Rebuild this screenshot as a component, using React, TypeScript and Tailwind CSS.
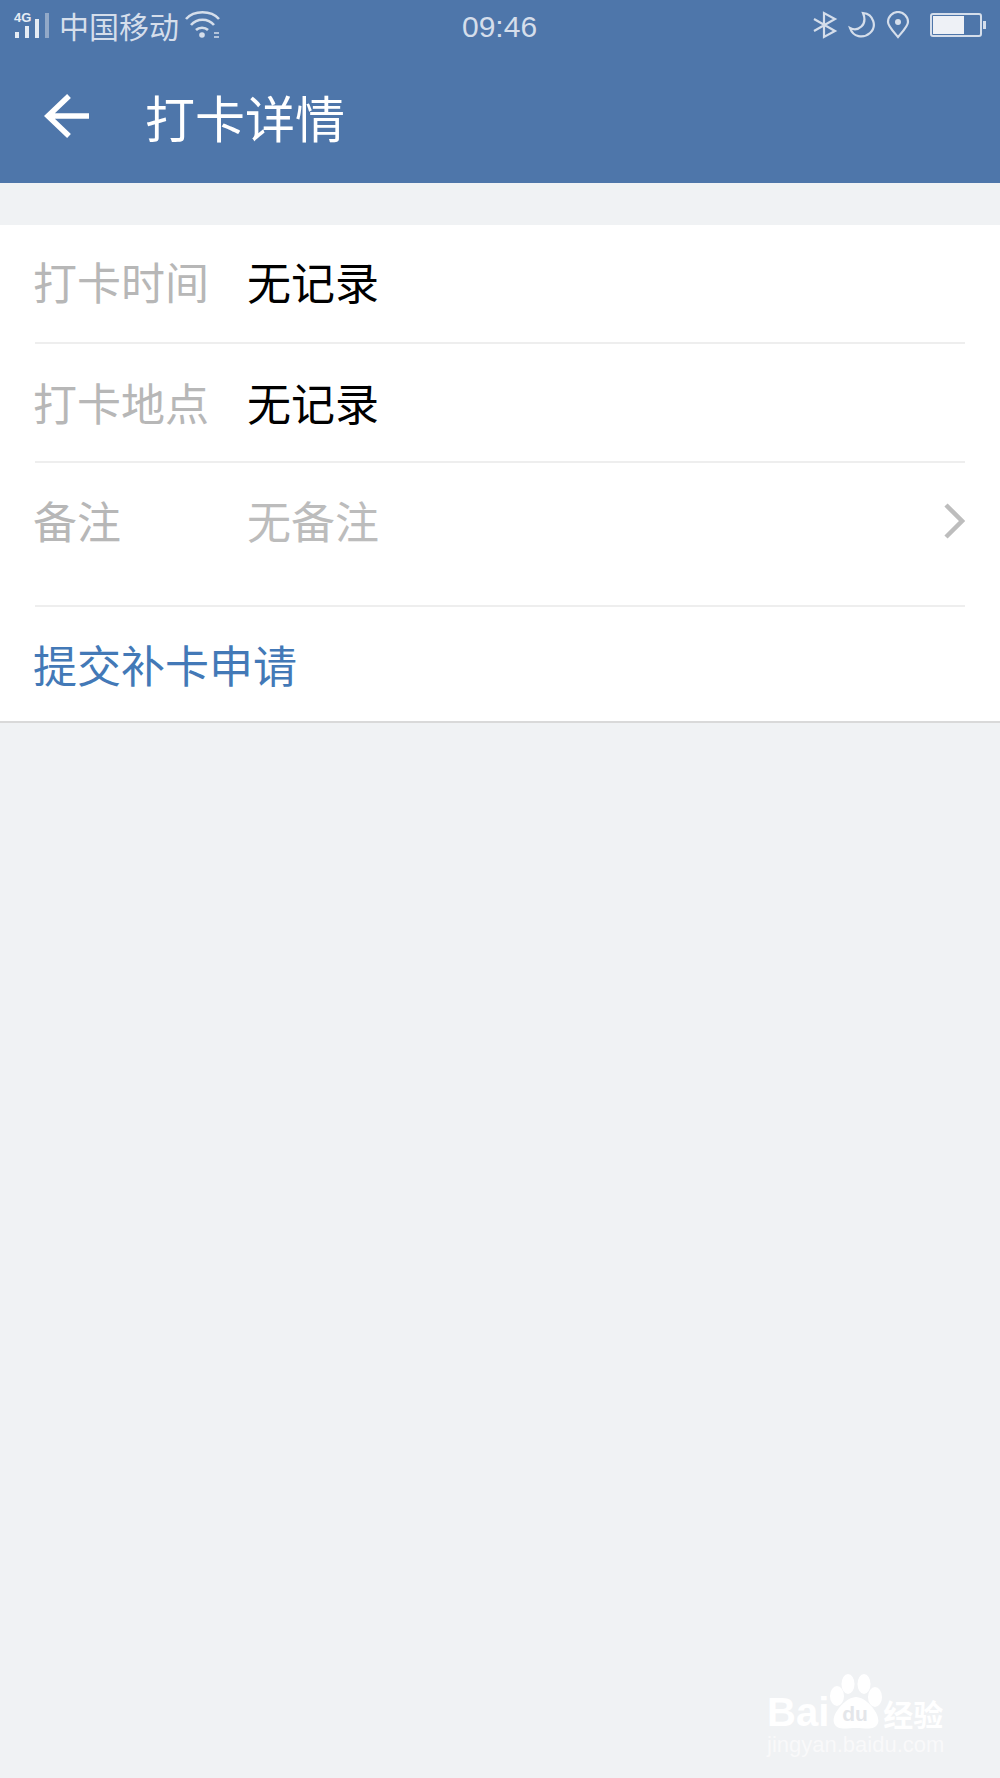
import React from 'react';

const font = { fontFamily: '"Noto Sans CJK SC", "Liberation Sans", sans-serif' };
const latin = { fontFamily: '"Liberation Sans", sans-serif' };

function Row({ label, value, muted, arrow, tall, pad = 'pb-[5px]' }: { label: string; value: string; muted?: boolean; arrow?: boolean; tall?: boolean; pad?: string }) {
  return (
    <div className={`ml-[35px] mr-[35px] flex border-b-2 border-[#eeeeee] ${tall ? 'h-[144px] pt-[21px]' : `h-[119px] items-center ${pad}`}`}>
      <div className="-ml-[2px] h-[72px] w-[214px] text-[44px] leading-[72px] text-[#b7b7b7]">{label}</div>
      <div className={`h-[72px] flex-1 text-[44px] leading-[72px] ${muted ? 'text-[#bcbcbc]' : 'text-black'}`}>{value}</div>
      {arrow && (
        <svg width="22" height="36" viewBox="0 0 22 36" className="mt-[19px]" fill="none" stroke="#bdbdbd" strokeWidth="4.5">
          <path d="M3 2 L19 18 L3 34" />
        </svg>
      )}
    </div>
  );
}

function Signal() {
  return (
    <div className="ml-[14px] flex h-[32px] w-[38px] items-end gap-[6px] self-start pl-[1px]">
      <div className="h-[6px] w-[4px] bg-[#e6ecf4]" />
      <div className="h-[12px] w-[4px] bg-[#e6ecf4]" />
      <div className="h-[19px] w-[4px] bg-[#e6ecf4]" />
      <div className="h-[25px] w-[4px] bg-[#92a9c8]" />
    </div>
  );
}

function StatusBar() {
  return (
    <div className="relative flex h-[54px] items-start pt-[6px] text-[#d5deeb]">
      <Signal />
      <span className="absolute left-[14px] top-[11px] text-[13px] font-bold leading-[13px] text-[#e6ecf4]" style={latin}>4G</span>
      <div className="ml-[7px] text-[30px] leading-[38px]">中国移动</div>
      <svg width="38" height="30" viewBox="0 0 38 30" className="ml-[5px] mt-[4px]" fill="none" stroke="#d5deeb" strokeWidth="2.6">
        <path d="M2 9 C10 0 27 0 35 9" />
        <path d="M7 15 C13 8 24 8 30 15" />
        <path d="M12 20 C15 17 21 17 24 20" />
        <circle cx="18" cy="25" r="2.8" fill="#d5deeb" stroke="none" />
        <path d="M30 23 H35 M30 27 H35" strokeWidth="1.6" />
      </svg>
      <div className="ml-[240px] mt-[1px] flex-1 text-[30px] leading-[40px]" style={latin}>09:46</div>
      <svg width="26" height="28" viewBox="0 0 26 28" fill="none" stroke="#d5deeb" strokeWidth="2.2" className="mr-[10px] mt-[5px]">
        <path d="M2 8 L23 20 L12 26 V2 L23 8 L2 20" />
      </svg>
      <svg width="28" height="28" viewBox="0 0 28 28" fill="none" stroke="#d5deeb" strokeWidth="2.2" className="mr-[10px] mt-[5px]">
        <path d="M15 2 C26 3 29 16 22 22 C15 28 5 26 2 17 C10 21 20 14 15 2 Z" />
      </svg>
      <svg width="24" height="28" viewBox="0 0 24 28" fill="none" stroke="#d5deeb" strokeWidth="2.2" className="mr-[20px] mt-[5px]">
        <path d="M12 26 C6 19 2 15 2 11 A10 10 0 0 1 22 11 C22 15 18 19 12 26 Z" />
        <circle cx="12" cy="11" r="3" fill="#d5deeb" stroke="none" />
      </svg>
      <div className="mr-[14px] mt-[7px] flex items-center">
        <div className="h-[24px] w-[52px] rounded-[3px] border-2 border-[#d5deeb] p-[1px]">
          <div className="h-full w-[31px] bg-[#eef1f6]" />
        </div>
        <div className="ml-[1px] h-[8px] w-[3px] bg-[#d5deeb]" />
      </div>
    </div>
  );
}

function Watermark() {
  return (
    <div className="absolute left-[767px] top-[1672px] flex w-[180px] flex-col text-white" style={latin}>
      <div className="flex h-[58px] items-end">
        <div className="text-[40px] font-bold leading-[36px]">Bai</div>
        <div className="relative h-[56px] w-[54px]">
          <svg width="54" height="56" viewBox="0 0 54 56" fill="#ffffff">
            <ellipse cx="8" cy="22" rx="7" ry="10" />
            <ellipse cx="19" cy="10" rx="6.5" ry="10" />
            <ellipse cx="35" cy="10" rx="6.5" ry="10" />
            <ellipse cx="46" cy="23" rx="7" ry="10" />
            <path d="M27 23 C37 23 52 40 49 49 C46 57 36 54 27 54 C18 54 8 57 5 49 C2 40 17 23 27 23 Z" />
          </svg>
          <span className="absolute left-[13px] top-[29px] text-[21px] font-bold leading-[22px] text-[#e4e6ea]">du</span>
        </div>
        <div className="text-[30px] font-bold leading-[34px]" style={font}>经验</div>
      </div>
      <div className="mt-[2px] whitespace-nowrap text-[22px] leading-[26px] text-[#f9f9fa]">jingyan.baidu.com</div>
    </div>
  );
}

export default function App() {
  return (
    <div className="relative h-[1778px] w-[1000px] overflow-hidden bg-[#f0f2f4]" style={font}>
      <div className="h-[183px] bg-[#4e76aa]">
        <StatusBar />
        <div className="flex h-[129px] items-center pb-[5px]">
          <svg width="46" height="44" viewBox="0 0 46 44" fill="none" stroke="#ffffff" strokeWidth="5.5" className="ml-[44px]">
            <path d="M45 22 H4 M25 2 L4 22 L25 42" />
          </svg>
          <div className="ml-[55px] text-[50px] leading-[64px] text-white">打卡详情</div>
        </div>
      </div>
      <div className="mt-[42px] border-b-2 border-[#d9d9d9] bg-white">
        <Row label="打卡时间" value="无记录" />
        <Row label="打卡地点" value="无记录" pad="pb-[1px]" />
        <Row label="备注" value="无备注" muted arrow tall />
        <div className="ml-[33px] flex h-[114px] items-center pb-[1px] text-[44px] leading-[72px] text-[#4379b7]">提交补卡申请</div>
      </div>
      <Watermark />
    </div>
  );
}
